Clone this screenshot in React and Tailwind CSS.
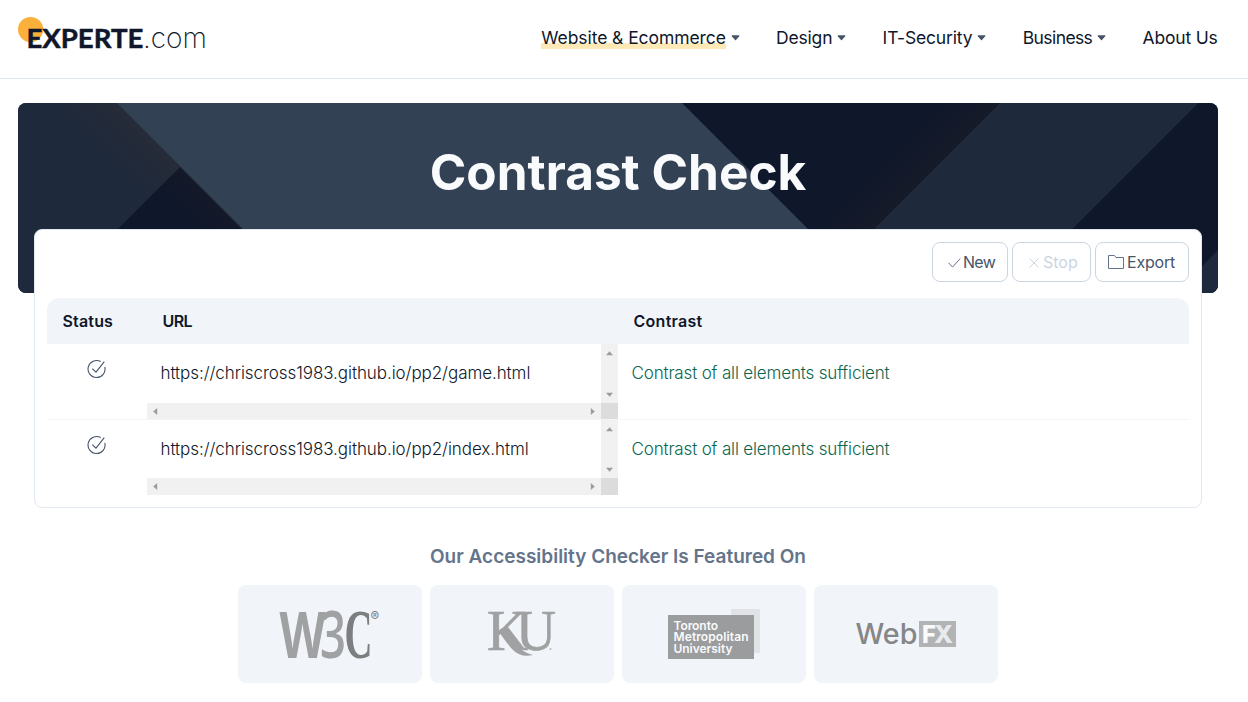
import React from "react";

const navItems = [
  { label: "Website & Ecommerce", tracking: "tracking-[-0.08px]", active: true, menu: true },
  { label: "Design", tracking: "tracking-[-0.2px]", menu: true },
  { label: "IT-Security", tracking: "tracking-[-0.15px]", menu: true },
  { label: "Business", tracking: "tracking-[-0.6px]", menu: true },
  { label: "About Us", tracking: "tracking-[-0.2px]" },
];

function Logo() {
  return (
    <svg width="200" height="46" viewBox="18 12 200 46" className="block overflow-visible">
      <circle cx="30.6" cy="29.5" r="12.6" fill="#fbb03b" />
      <text x="26.4" y="48" textLength="117" lengthAdjust="spacingAndGlyphs" fontFamily="Lato, sans-serif" fontWeight="700" fontSize="27.5" fill="#0f172a" stroke="#0f172a" strokeWidth="0.5">EXPERTE</text>
      <text x="143" y="48" textLength="64" lengthAdjust="spacingAndGlyphs" fontFamily="Inter, sans-serif" fontWeight="200" fontSize="28.5" fill="#0f172a">.com</text>
    </svg>
  );
}

function Caret() {
  return (
    <svg width="9" height="6" viewBox="0 0 9 6" className="mt-px block">
      <path d="M1.2 0.9h6.6L4.5 4.7z" fill="#475569" stroke="#475569" strokeWidth="1.2" strokeLinejoin="round" />
    </svg>
  );
}

function Header() {
  return (
    <header className="flex h-[79px] justify-between border-b border-[#e2e8f0] pl-[18px] pr-[30.5px]">
      <div className="pt-3">
        <Logo />
      </div>
      <nav className="flex h-[75px] items-center gap-[36.3px] text-[17.5px] leading-6 text-[#0f172a]">
        {navItems.map((item) => (
          <a key={item.label} className="flex items-center gap-[5px] whitespace-nowrap">
            <span className={item.tracking + (item.active ? " bg-[linear-gradient(to_bottom,transparent_17px,#fde9b5_17px,#fde9b5_23px,transparent_23px)]" : "")}>
              {item.label}
            </span>
            {item.menu && <Caret />}
          </a>
        ))}
      </nav>
    </header>
  );
}

function BannerBackground() {
  return (
    <svg width="1200" height="190" viewBox="0 0 1200 190" className="absolute inset-0">
      <defs>
        <linearGradient id="slate" gradientUnits="userSpaceOnUse" x1="111" y1="77" x2="140" y2="48">
          <stop offset="0" stopColor="#1e293b" />
          <stop offset="1" stopColor="#252b38" />
        </linearGradient>
        <linearGradient id="peak" gradientUnits="userSpaceOnUse" x1="153" y1="95" x2="183" y2="65">
          <stop offset="0" stopColor="#0f172a" />
          <stop offset="1" stopColor="#161a28" />
        </linearGradient>
        <linearGradient id="valley" gradientUnits="userSpaceOnUse" x1="890" y1="33" x2="922" y2="65">
          <stop offset="0" stopColor="#0f172a" />
          <stop offset="1" stopColor="#171b29" />
        </linearGradient>
      </defs>
      <rect width="1200" height="190" fill="#334155" />
      <path d="M0 0H99L289 190H0z" fill="url(#slate)" />
      <path d="M162 64L288 190H36z" fill="url(#peak)" />
      <path d="M664 0H983L793 190H854z" fill="url(#valley)" />
      <path d="M983 0H1180L990 190H793z" fill="#1e293b" />
      <path d="M1180 0H1200V190H990z" fill="#0f172a" />
      <path d="M1200 147V190H1157z" fill="#1e293b" />
    </svg>
  );
}

function ToolButton({ className, children }) {
  return (
    <button className={"flex h-10 items-center rounded-lg border border-[#cbd5e1] text-base " + className}>
      {children}
    </button>
  );
}

function StatusIcon() {
  return (
    <svg width="20" height="20" viewBox="0 0 20 20" fill="none" stroke="#475569" strokeWidth="1.1">
      <path d="M13.7 2.6A8.5 8.5 0 1 0 17.8 8" />
      <path d="M5.3 9.6l3.7 3.6L17.3 2.6" />
    </svg>
  );
}

function Arrow({ d }) {
  return (
    <svg width="7" height="7" viewBox="0 0 7 7" className="block">
      <path d={d} fill="#9c9c9c" />
    </svg>
  );
}

function ScrollCell({ children, gridRows }) {
  return (
    <div className={"grid w-[471px] grid-cols-[1fr_17px] " + gridRows}>
      <div className="pl-[13.5px] pt-[17px] text-[17px] font-light leading-6 tracking-[-0.07px] text-[#0f172a]">{children}</div>
      <div className="flex flex-col items-center justify-between bg-[#f1f1f1] pb-[5px] pt-[6px]">
        <Arrow d="M0 5.2L3.5 1.2L7 5.2z" />
        <Arrow d="M0 1.8L3.5 5.8L7 1.8z" />
      </div>
      <div className="flex items-center justify-between bg-[#f1f1f1] px-[5px]">
        <Arrow d="M5.2 0L1.2 3.5L5.2 7z" />
        <Arrow d="M1.8 0L5.8 3.5L1.8 7z" />
      </div>
      <div className="bg-[#dcdcdc]" />
    </div>
  );
}

function Row({ url, className, gridRows }) {
  return (
    <div className={"flex " + className}>
      <div className="flex w-[100px] justify-center pt-[15px]">
        <StatusIcon />
      </div>
      <ScrollCell gridRows={gridRows}>{url}</ScrollCell>
      <div className="pl-[13.5px] pt-[17px] text-[17px] font-light leading-6 tracking-[-0.16px] text-[#08664f]">
        Contrast of all elements sufficient
      </div>
    </div>
  );
}

function Tile({ children }) {
  return <div className="flex h-[98px] w-[184px] rounded-lg bg-[#f1f5f9]">{children}</div>;
}

function LogoSvg({ children }) {
  return (
    <svg width="184" height="98" viewBox="0 0 184 98">
      {children}
    </svg>
  );
}

export default function App() {
  return (
    <div className="h-[702px] overflow-hidden bg-white font-['Inter',sans-serif]">
      <Header />
      <main className="ml-[18px] mt-6 w-[1200px]">
        <section className="relative h-[190px] overflow-hidden rounded-lg">
          <BannerBackground />
          <h1 className="relative pt-[37px] text-center text-[49.5px] font-bold leading-[64px] text-[#f8fafc]">
            Contrast Check
          </h1>
        </section>

        <section className="relative mx-4 -mt-16 h-[279px] rounded-lg border border-[#e2e8f0] bg-white p-3">
          <div className="flex justify-end gap-1 text-[#475569]">
            <ToolButton className="w-[76px] pl-[15px]">
              <svg width="13" height="12" viewBox="0 0 13 12" fill="none" stroke="#64748b" className="mr-[2px] mt-[2px]">
                <path d="M0.6 5.8l3.9 4.3L12.2 1.6" />
              </svg>
              <span className="tracking-[-0.7px]">New</span>
            </ToolButton>
            <ToolButton className="w-[79px] pl-4 text-[#cbd5e1]">
              <svg width="10" height="10" viewBox="0 0 10 10" fill="none" stroke="#cbd5e1" className="mr-1 mt-[2px]">
                <path d="M0.5 0.5l9 9M9.5 0.5l-9 9" />
              </svg>
              <span>Stop</span>
            </ToolButton>
            <ToolButton className="w-[94px] pl-3">
              <svg width="17" height="16" viewBox="0 0 17 16" fill="none" stroke="#64748b" className="mr-[2px]">
                <path d="M0.5 14.5V1.5H6.5L8 3.5H15.5V14.5z" />
              </svg>
              <span className="tracking-[-0.2px]">Export</span>
            </ToolButton>
          </div>

          <div className="mt-4">
            <div className="flex h-[46px] items-center rounded-t-xl bg-[#f1f5f9] text-base font-semibold text-[#0f172a]">
              <div className="w-[115.5px] pl-[15.5px] tracking-[0.17px]">Status</div>
              <div className="w-[471px] tracking-[-0.6px]">URL</div>
              <div className="tracking-[0.27px]">Contrast</div>
            </div>
            <Row url="https://chriscross1983.github.io/pp2/game.html" className="h-[76px] border-b border-[#f1f5f9]" gridRows="grid-rows-[59px_16px]" />
            <Row url="https://chriscross1983.github.io/pp2/index.html" className="h-[75px]" gridRows="grid-rows-[58px_17px]" />
          </div>
        </section>

        <h2 className="mt-[35px] text-center text-[19px] font-semibold leading-7 text-[#64748b]">
          Our Accessibility Checker Is Featured On
        </h2>
        <div className="mt-[14px] flex justify-center gap-2">
          <Tile>
            <LogoSvg>
              <text x="41.5" y="72.5" textLength="46" lengthAdjust="spacingAndGlyphs" fontFamily="Open Sans, sans-serif" fontWeight="700" fontSize="65" fill="#a0a1a2">W</text>
              <text x="82" y="72.5" textLength="26" lengthAdjust="spacingAndGlyphs" fontFamily="Open Sans, sans-serif" fontWeight="600" fontSize="65" fill="#a0a1a2">3</text>
              <text x="106.5" y="72.5" textLength="28" lengthAdjust="spacingAndGlyphs" fontFamily="Liberation Serif, serif" fontWeight="700" fontSize="69" fill="#7d7e80">C</text>
              <text x="132.5" y="35.5" fontFamily="Inter, sans-serif" fontSize="13" fill="#7d7e80">®</text>
            </LogoSvg>
          </Tile>
          <Tile>
            <LogoSvg>
              <g fontFamily="Liberation Serif, serif" fontSize="58" fill="#a0a1a2" stroke="#a0a1a2" strokeWidth="0.7">
                <text x="57" y="65" textLength="41" lengthAdjust="spacingAndGlyphs">K</text>
                <text x="86" y="65" textLength="40" lengthAdjust="spacingAndGlyphs">U</text>
              </g>
              <path d="M72 43C80 54 88 66 103 70C95 72 88 70 83 65C77 59 73 52 68 46z" fill="#a0a1a2" />
              <circle cx="120.5" cy="64" r="1" fill="#b5b6b8" />
            </LogoSvg>
          </Tile>
          <Tile>
            <LogoSvg>
              <rect x="109" y="24" width="29" height="44" fill="#e1e3e6" />
              <rect x="46" y="30" width="86" height="44" fill="#9b9c9d" />
              <g fontFamily="Inter, sans-serif" fontWeight="600" fontSize="12" fill="#f8fafc">
                <text x="51.5" y="44.5" textLength="44.5">Toronto</text>
                <text x="51.5" y="56" textLength="75">Metropolitan</text>
                <text x="51.5" y="67.5" textLength="59">University</text>
              </g>
            </LogoSvg>
          </Tile>
          <Tile>
            <LogoSvg>
              <text x="41.5" y="59" textLength="62" lengthAdjust="spacingAndGlyphs" fontFamily="Inter, sans-serif" fontWeight="500" fontSize="28" fill="#858688">Web</text>
              <rect x="105" y="36" width="37" height="26" fill="#b1b3b5" />
              <text x="108" y="58" textLength="14" lengthAdjust="spacingAndGlyphs" fontFamily="Inter, sans-serif" fontWeight="800" fontSize="24.5" fill="#f8fafc">F</text>
              <text x="120" y="58" textLength="19" lengthAdjust="spacingAndGlyphs" fontFamily="Inter, sans-serif" fontWeight="800" fontSize="24.5" fill="#e8eaed">X</text>
            </LogoSvg>
          </Tile>
        </div>
      </main>
    </div>
  );
}
